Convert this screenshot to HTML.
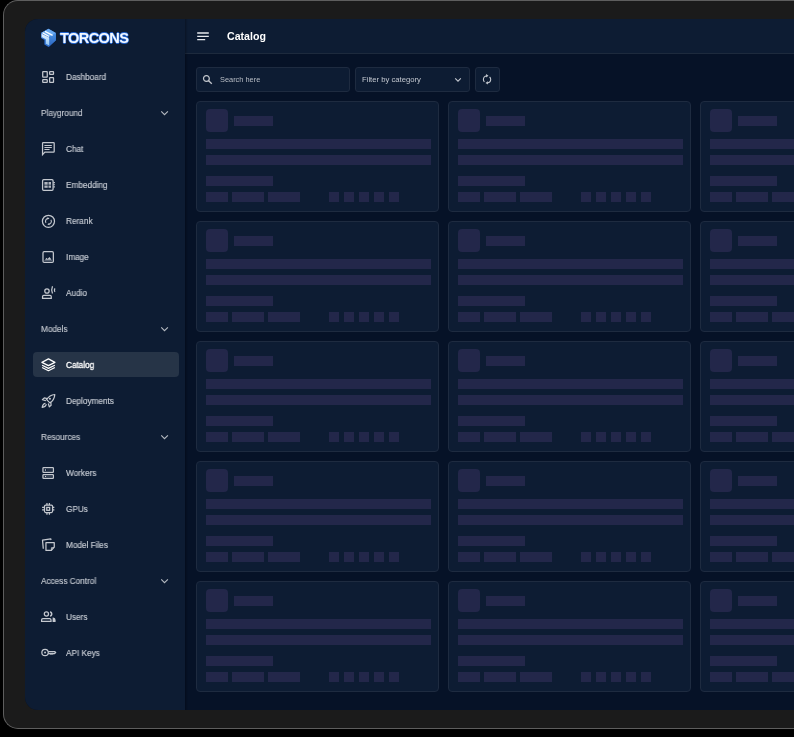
<!DOCTYPE html>
<html><head><meta charset="utf-8"><style>
*{margin:0;padding:0;box-sizing:border-box}
html,body{width:794px;height:737px;overflow:hidden;background:#000;font-family:"Liberation Sans",sans-serif}
body>*{position:absolute}
div{will-change:transform}
#bezel{left:3px;top:0;width:830px;height:729px;background:#1b1b1b;border-radius:15px;border:1px solid #5e5e5e;border-right:none}
#screen{left:25px;top:19px;width:800px;height:691px;background:#061227;border-radius:13px 0 0 13px;overflow:hidden}
#side{position:absolute;left:0;top:0;width:160px;height:691px;background:#0d1c33}
#shadow{position:absolute;left:160px;top:0;width:3px;height:691px;background:linear-gradient(to right,rgba(0,0,0,.28),rgba(0,0,0,.08) 60%,rgba(0,0,0,0))}
#hdr{position:absolute;left:160px;top:0;width:700px;height:35px;background:#0d1c33;border-bottom:1px solid #1d2a3d}
.it,.sec{font-size:8.6px;line-height:1.117;color:#c9ced6;white-space:nowrap;transform:scaleX(.955);transform-origin:0 0;-webkit-text-stroke:.15px currentColor}
.it{left:66.3px}
.sec{left:40.6px;color:#c2c7cf}
.act{color:#fff;-webkit-text-stroke:.3px #fff}
.ic{left:38px;color:#c4c8cf}
.chev{left:155px}
#actbg{left:33px;top:352px;width:146px;height:25px;background:#263447;border-radius:4px}
.card{width:243px;height:111px;background:#0d1c33;border:1px solid #1e2b40;border-radius:4px}
.card i{position:absolute;display:block;background:#23274a}
.card .av{left:9px;top:7px;width:22px;height:23px;border-radius:4px}
.card .b{height:10px}
.card .s{top:90.2px;width:10.7px;height:10px}
.box{height:24.5px;background:#0d1c33;border:1px solid #1e2b40;border-radius:3px}
</style></head><body>
<div id="bezel"></div>
<div id="screen">
<div id="side"></div>
<div id="hdr"></div>
<div id="shadow"></div>
</div>
<div id="actbg"></div>
<div class="it" style="top:73.12px">Dashboard</div><svg class="ic" style="top:67.00px;" width="20" height="20" viewBox="0 0 20 20"><g stroke="currentColor" fill="none" stroke-width="1.25"><rect x="4.72" y="4.72" width="4.53" height="5.48" rx=".4"/><rect x="4.72" y="12.59" width="4.53" height="2.77" rx=".4"/><rect x="11.64" y="4.72" width="3.86" height="2.77" rx=".4"/><rect x="11.64" y="10.55" width="3.86" height="4.81" rx=".4"/></g></svg><div class="sec" style="top:109.10px">Playground</div><svg class="chev" style="top:103.03px" width="20" height="20" viewBox="0 0 20 20"><path d="M6.24 8.41L9.5 11.67 12.9 8.28" stroke="#b4b9c0" stroke-width="1.1" fill="none"/></svg><div class="it" style="top:145.08px">Chat</div><svg class="ic" style="top:138.96px;" width="20" height="20" viewBox="0 0 20 20"><g stroke="currentColor" fill="none" stroke-width="1.25" stroke-width="1.2"><path d="M4.55 15.6V4.3q0-.7.7-.7H15.5q.7 0 .7.7v8.1q0 .7-.7.7H6.9z"/><path d="M6.4 6.5h7.4M6.4 8.45h7.4M6.4 10.45h5.2" stroke-width="1.15"/></g></svg><div class="it" style="top:181.06px">Embedding</div><svg class="ic" style="top:174.94px;" width="20" height="20" viewBox="0 0 20 20"><g stroke="currentColor" fill="none" stroke-width="1.25"><rect x="4.58" y="4.58" width="10.5" height="10.78" rx="1.1"/><path d="M15.3 7.6h1.6M15.3 9.7h1.6M15.3 11.9h1.6" stroke-width="1.1"/></g><g fill="currentColor" stroke="none" opacity=".9"><rect x="6.4" y="7" width="3.3" height="2.7"/><rect x="10.5" y="7" width="2.5" height="2.7"/><rect x="6.4" y="10.5" width="3.3" height="2.3"/><rect x="10.5" y="10.5" width="2.5" height="2.3"/></g></svg><div class="it" style="top:217.04px">Rerank</div><svg class="ic" style="top:210.92px;" width="20" height="20" viewBox="0 0 20 20"><g stroke="currentColor" fill="none" stroke-width="1.25" stroke-width="1.2"><circle cx="10.45" cy="10.31" r="6.05"/><path d="M10.6 7.4A2.9 2.9 0 0 0 8 11.9M10.3 13.2A2.9 2.9 0 0 0 12.9 8.7" stroke-width="1.1"/></g><g fill="currentColor" stroke="none"><path d="M9.4 6.3L11.6 7.4 9.4 8.5z M11.5 12.1L9.3 13.2 11.5 14.3z"/></g></svg><div class="it" style="top:253.02px">Image</div><svg class="ic" style="top:246.90px;" width="20" height="20" viewBox="0 0 20 20"><g stroke="currentColor" fill="none" stroke-width="1.25"><rect x="4.99" y="4.72" width="10.37" height="10.64" rx="1.2"/><path d="M6.3 13.5h7.8" stroke-width=".9" opacity=".45"/></g><path fill="currentColor" stroke="none" d="M7 12.7L8.5 10.8 9.5 11.9 11.5 10 13.6 12.7z"/></svg><div class="it" style="top:289.00px">Audio</div><svg class="ic" style="top:282.88px;" width="20" height="20" viewBox="0 0 20 20"><g stroke="currentColor" fill="none" stroke-width="1.25" stroke-width="1.2"><circle cx="8.96" cy="8" r="2.2"/><path d="M4.55 15.4v-1.9q0-1.2 1.2-1.2h6.3q1.2 0 1.2 1.2v1.9z"/><path d="M14.5 3.3Q12.9 6.9 14.5 10.6M16.9 5.3Q15.8 7.1 16.9 8.9"/></g></svg><div class="sec" style="top:324.98px">Models</div><svg class="chev" style="top:318.91px" width="20" height="20" viewBox="0 0 20 20"><path d="M6.24 8.41L9.5 11.67 12.9 8.28" stroke="#b4b9c0" stroke-width="1.1" fill="none"/></svg><div class="it act" style="top:360.96px">Catalog</div><svg class="ic" style="top:354.84px;color:#fff" width="20" height="20" viewBox="0 0 20 20"><g stroke="currentColor" fill="none" stroke-width="1.25" stroke-width="1.45" stroke-linejoin="round"><path d="M10.45 3.9L16.9 7.35 10.45 10.6 3.9 7.35z"/><path d="M4.1 10.3l6.35 3.1 6.4-3.1M4.1 12.5l6.35 3.2 6.4-3.2"/></g></svg><div class="it" style="top:396.94px">Deployments</div><svg class="ic" style="top:390.82px;" width="20" height="20" viewBox="0 0 20 20"><g stroke="currentColor" fill="none" stroke-width="1.25" stroke-width="1.3" stroke-linejoin="round"><path d="M16.8 3.5C13.5 3.8 10.5 5.6 8.6 8.6L11.9 11.9C14.9 10 16.6 7 16.8 3.5z"/><path d="M9.2 7.6L6.3 6.9 4.4 8.7 7.9 9.7M12.8 11.3L13.1 14.3 11.3 15.9 10.3 12.5"/><path d="M7.5 12.4C6 12.5 4.7 13.7 4.2 16.4C6.9 15.9 8.1 14.7 8.3 13.2"/></g><circle cx="11.94" cy="7.87" r="1" fill="currentColor" stroke="none"/></svg><div class="sec" style="top:432.92px">Resources</div><svg class="chev" style="top:426.85px" width="20" height="20" viewBox="0 0 20 20"><path d="M6.24 8.41L9.5 11.67 12.9 8.28" stroke="#b4b9c0" stroke-width="1.1" fill="none"/></svg><div class="it" style="top:468.90px">Workers</div><svg class="ic" style="top:462.78px;" width="20" height="20" viewBox="0 0 20 20"><g stroke="currentColor" fill="none" stroke-width="1.25" stroke-width="1.25"><rect x="4.95" y="4.67" width="10.45" height="4.8" rx=".7"/><rect x="4.95" y="11.6" width="10.45" height="3.8" rx=".7"/></g><g fill="currentColor" stroke="none"><rect x="6.9" y="6.1" width=".9" height="1.8"/><circle cx="7.46" cy="13.45" r=".65"/></g><path d="M8.9 7h5.3M8.1 13.45h6.1" stroke="currentColor" stroke-width=".9" opacity=".25"/></svg><div class="it" style="top:504.88px">GPUs</div><svg class="ic" style="top:498.76px;" width="20" height="20" viewBox="0 0 20 20"><g stroke="currentColor" fill="none" stroke-width="1.25" stroke-width="1.3"><rect x="6.5" y="6.1" width="8.05" height="7.4" rx="1.2"/><rect x="8.75" y="8.4" width="2.9" height="2.9"/><path d="M8.96 4.1v2M11.4 4.1v2M8.96 13.5v2.2M11.4 13.5v2.2M4.1 8.4h2.4M4.1 10.85h2.4M14.55 8.4h1.8M14.55 10.85h1.8"/></g></svg><div class="it" style="top:540.86px">Model Files</div><svg class="ic" style="top:534.74px;" width="20" height="20" viewBox="0 0 20 20"><g stroke="currentColor" fill="none" stroke-width="1.25" stroke-width="1.2" stroke-linejoin="round"><path d="M5.3 13.8L4.5 5.1 12.7 3.9l.5 1"/><path d="M7.95 7.65h8.3v4.5l-3.1 3.3H7.95z"/><path d="M13.4 15.3v-2.6h2.7" stroke-width=".9"/></g></svg><div class="sec" style="top:576.84px">Access Control</div><svg class="chev" style="top:570.77px" width="20" height="20" viewBox="0 0 20 20"><path d="M6.24 8.41L9.5 11.67 12.9 8.28" stroke="#b4b9c0" stroke-width="1.1" fill="none"/></svg><div class="it" style="top:612.82px">Users</div><svg class="ic" style="top:606.70px;" width="20" height="20" viewBox="0 0 20 20"><g stroke="currentColor" fill="none" stroke-width="1.25" stroke-width="1.2"><circle cx="8.41" cy="7.06" r="2.1"/><path d="M3.6 14.3v-1.4q0-1.4 1.4-1.4h6.6q1.4 0 1.4 1.4v1.4z"/><path d="M12.2 4.7A2.5 2.5 0 0 1 12.2 9.3" stroke-width="1.6"/></g><path fill="currentColor" stroke="none" d="M14.6 10.6h.6q2.4.2 2.4 2.4v1.9h-3z"/></svg><div class="it" style="top:648.80px">API Keys</div><svg class="ic" style="top:642.68px;" width="20" height="20" viewBox="0 0 20 20"><g stroke="currentColor" fill="none" stroke-width="1.25" stroke-width="1.2" stroke-linejoin="round"><circle cx="7.06" cy="9.5" r="3.2"/><path d="M10.2 8.6H16.6L17.7 9.5 16.6 10.5H15.4L14.8 11 14.2 10.5 13.6 11 13 10.5 12.4 11 11.8 10.5H10.2"/></g><circle cx="7.06" cy="9.5" r=".95" fill="currentColor" stroke="none"/></svg>
<div id="logo" style="left:60.2px;top:30.09px;font-size:14.6px;line-height:1.117;font-weight:bold;color:#f4f9ff;letter-spacing:-0.62px;text-shadow:.6px 0 0 #2466d0,-.6px 0 0 #2466d0,0 .6px 0 #2466d0,0 -.6px 0 #2466d0,0 0 1.5px #1b4fa8">TORCONS</div>
<svg style="left:38px;top:26px" width="22" height="22" viewBox="0 0 22 22">
<defs><linearGradient id="lg1" x1="0" y1="0" x2="0" y2="1"><stop offset="0" stop-color="#e8f4ff"/><stop offset="1" stop-color="#8cc4f4"/></linearGradient>
<linearGradient id="lg2" x1="0" y1="0" x2="0" y2="1"><stop offset="0" stop-color="#4b94e6"/><stop offset="1" stop-color="#2a63be"/></linearGradient></defs>
<path d="M10.45 2.8L17.9 7V14.2L10.6 20.9 6.4 18.5V14L3 12V7z" fill="#2f70cf"/>
<path d="M11.9 10.4L17.9 7V14.2L10.6 20.9z" fill="url(#lg2)"/>
<path d="M3 7L10.45 2.8 17.9 7 11.9 10.4z" fill="#6aaaf0"/>
<path d="M4.6 6.9l6.6 3.6M7 5.3l7.6 4" stroke="#fbfdff" stroke-width="1.3"/>
<path d="M3.6 7.8L11.2 11.6V19.6L7.4 17.6V13.4L3.6 11.4z" fill="url(#lg1)"/>
<path d="M7.4 13.6L3.6 11.4M7.4 13.4V17.6" stroke="#2a6bd1" stroke-width=".7"/>
</svg>
<div style="left:226.6px;top:30.61px;font-size:10.6px;line-height:1.117;font-weight:bold;color:#fff">Catalog</div>
<svg style="left:196px;top:31px" width="15" height="11" viewBox="0 0 15 11"><path d="M1.2 2h11.6M1.2 5.3h11.6M1.2 8.6h8" stroke="#e6e9ee" stroke-width="1.3"/></svg>
<div class="box" style="left:196px;top:67px;width:154px"></div>
<div class="box" style="left:355px;top:67px;width:115px"></div>
<div class="box" style="left:475px;top:67px;width:25px"></div>
<svg style="left:202px;top:73.5px" width="12" height="12" viewBox="0 0 12 12"><circle cx="4.4" cy="4.5" r="2.9" stroke="#c4c8cf" stroke-width="1.2" fill="none"/><path d="M6.6 6.7l3.2 3" stroke="#c4c8cf" stroke-width="1.3"/></svg>
<svg style="left:453.5px;top:76.5px" width="8" height="6" viewBox="0 0 8 6"><path d="M1.2 1.3l2.8 2.8 2.8-2.8" stroke="#c4c8cf" stroke-width="1.1" fill="none"/></svg>
<svg style="left:477px;top:69px" width="20" height="20" viewBox="0 0 20 20"><g stroke="#c4c8cf" stroke-width="1.1" fill="none"><path d="M9.8 6.8C7.7 7.2 6.4 8.8 6.4 10.5C6.4 11.4 6.8 12.2 7.4 12.8M12.6 8C13.3 8.6 13.7 9.5 13.7 10.4C13.7 12.1 12.4 13.5 10.3 13.9"/></g><path d="M9.1 5.1L11.5 6.8 9.1 8.5z M10.9 12.2L8.5 13.9 10.9 15.6z" fill="#c4c8cf"/></svg>
<div style="left:220px;top:75.60px;font-size:7.4px;line-height:1.117;color:#b9bec6">Search here</div>
<div style="left:361.8px;top:76.13px;font-size:7.7px;line-height:1.117;color:#c2c7cf">Filter by category</div>
<div class="card" style="left:196px;top:101.0px"><i class="av"></i><i class="b" style="left:36.5px;top:14px;width:39px"></i><i class="b" style="left:8.7px;top:37.2px;width:225px"></i><i class="b" style="left:8.7px;top:53px;width:225px"></i><i class="b" style="left:8.7px;top:74.2px;width:67px"></i><i class="b" style="left:8.7px;top:90.2px;width:22px"></i><i class="b" style="left:34.7px;top:90.2px;width:32px"></i><i class="b" style="left:70.5px;top:90.2px;width:32px"></i><i class="b s" style="left:131.8px"></i><i class="b s" style="left:146.8px"></i><i class="b s" style="left:161.8px"></i><i class="b s" style="left:176.8px"></i><i class="b s" style="left:191.8px"></i></div><div class="card" style="left:448px;top:101.0px"><i class="av"></i><i class="b" style="left:36.5px;top:14px;width:39px"></i><i class="b" style="left:8.7px;top:37.2px;width:225px"></i><i class="b" style="left:8.7px;top:53px;width:225px"></i><i class="b" style="left:8.7px;top:74.2px;width:67px"></i><i class="b" style="left:8.7px;top:90.2px;width:22px"></i><i class="b" style="left:34.7px;top:90.2px;width:32px"></i><i class="b" style="left:70.5px;top:90.2px;width:32px"></i><i class="b s" style="left:131.8px"></i><i class="b s" style="left:146.8px"></i><i class="b s" style="left:161.8px"></i><i class="b s" style="left:176.8px"></i><i class="b s" style="left:191.8px"></i></div><div class="card" style="left:700px;top:101.0px"><i class="av"></i><i class="b" style="left:36.5px;top:14px;width:39px"></i><i class="b" style="left:8.7px;top:37.2px;width:225px"></i><i class="b" style="left:8.7px;top:53px;width:225px"></i><i class="b" style="left:8.7px;top:74.2px;width:67px"></i><i class="b" style="left:8.7px;top:90.2px;width:22px"></i><i class="b" style="left:34.7px;top:90.2px;width:32px"></i><i class="b" style="left:70.5px;top:90.2px;width:32px"></i><i class="b s" style="left:131.8px"></i><i class="b s" style="left:146.8px"></i><i class="b s" style="left:161.8px"></i><i class="b s" style="left:176.8px"></i><i class="b s" style="left:191.8px"></i></div><div class="card" style="left:196px;top:220.95px"><i class="av"></i><i class="b" style="left:36.5px;top:14px;width:39px"></i><i class="b" style="left:8.7px;top:37.2px;width:225px"></i><i class="b" style="left:8.7px;top:53px;width:225px"></i><i class="b" style="left:8.7px;top:74.2px;width:67px"></i><i class="b" style="left:8.7px;top:90.2px;width:22px"></i><i class="b" style="left:34.7px;top:90.2px;width:32px"></i><i class="b" style="left:70.5px;top:90.2px;width:32px"></i><i class="b s" style="left:131.8px"></i><i class="b s" style="left:146.8px"></i><i class="b s" style="left:161.8px"></i><i class="b s" style="left:176.8px"></i><i class="b s" style="left:191.8px"></i></div><div class="card" style="left:448px;top:220.95px"><i class="av"></i><i class="b" style="left:36.5px;top:14px;width:39px"></i><i class="b" style="left:8.7px;top:37.2px;width:225px"></i><i class="b" style="left:8.7px;top:53px;width:225px"></i><i class="b" style="left:8.7px;top:74.2px;width:67px"></i><i class="b" style="left:8.7px;top:90.2px;width:22px"></i><i class="b" style="left:34.7px;top:90.2px;width:32px"></i><i class="b" style="left:70.5px;top:90.2px;width:32px"></i><i class="b s" style="left:131.8px"></i><i class="b s" style="left:146.8px"></i><i class="b s" style="left:161.8px"></i><i class="b s" style="left:176.8px"></i><i class="b s" style="left:191.8px"></i></div><div class="card" style="left:700px;top:220.95px"><i class="av"></i><i class="b" style="left:36.5px;top:14px;width:39px"></i><i class="b" style="left:8.7px;top:37.2px;width:225px"></i><i class="b" style="left:8.7px;top:53px;width:225px"></i><i class="b" style="left:8.7px;top:74.2px;width:67px"></i><i class="b" style="left:8.7px;top:90.2px;width:22px"></i><i class="b" style="left:34.7px;top:90.2px;width:32px"></i><i class="b" style="left:70.5px;top:90.2px;width:32px"></i><i class="b s" style="left:131.8px"></i><i class="b s" style="left:146.8px"></i><i class="b s" style="left:161.8px"></i><i class="b s" style="left:176.8px"></i><i class="b s" style="left:191.8px"></i></div><div class="card" style="left:196px;top:340.9px"><i class="av"></i><i class="b" style="left:36.5px;top:14px;width:39px"></i><i class="b" style="left:8.7px;top:37.2px;width:225px"></i><i class="b" style="left:8.7px;top:53px;width:225px"></i><i class="b" style="left:8.7px;top:74.2px;width:67px"></i><i class="b" style="left:8.7px;top:90.2px;width:22px"></i><i class="b" style="left:34.7px;top:90.2px;width:32px"></i><i class="b" style="left:70.5px;top:90.2px;width:32px"></i><i class="b s" style="left:131.8px"></i><i class="b s" style="left:146.8px"></i><i class="b s" style="left:161.8px"></i><i class="b s" style="left:176.8px"></i><i class="b s" style="left:191.8px"></i></div><div class="card" style="left:448px;top:340.9px"><i class="av"></i><i class="b" style="left:36.5px;top:14px;width:39px"></i><i class="b" style="left:8.7px;top:37.2px;width:225px"></i><i class="b" style="left:8.7px;top:53px;width:225px"></i><i class="b" style="left:8.7px;top:74.2px;width:67px"></i><i class="b" style="left:8.7px;top:90.2px;width:22px"></i><i class="b" style="left:34.7px;top:90.2px;width:32px"></i><i class="b" style="left:70.5px;top:90.2px;width:32px"></i><i class="b s" style="left:131.8px"></i><i class="b s" style="left:146.8px"></i><i class="b s" style="left:161.8px"></i><i class="b s" style="left:176.8px"></i><i class="b s" style="left:191.8px"></i></div><div class="card" style="left:700px;top:340.9px"><i class="av"></i><i class="b" style="left:36.5px;top:14px;width:39px"></i><i class="b" style="left:8.7px;top:37.2px;width:225px"></i><i class="b" style="left:8.7px;top:53px;width:225px"></i><i class="b" style="left:8.7px;top:74.2px;width:67px"></i><i class="b" style="left:8.7px;top:90.2px;width:22px"></i><i class="b" style="left:34.7px;top:90.2px;width:32px"></i><i class="b" style="left:70.5px;top:90.2px;width:32px"></i><i class="b s" style="left:131.8px"></i><i class="b s" style="left:146.8px"></i><i class="b s" style="left:161.8px"></i><i class="b s" style="left:176.8px"></i><i class="b s" style="left:191.8px"></i></div><div class="card" style="left:196px;top:460.85px"><i class="av"></i><i class="b" style="left:36.5px;top:14px;width:39px"></i><i class="b" style="left:8.7px;top:37.2px;width:225px"></i><i class="b" style="left:8.7px;top:53px;width:225px"></i><i class="b" style="left:8.7px;top:74.2px;width:67px"></i><i class="b" style="left:8.7px;top:90.2px;width:22px"></i><i class="b" style="left:34.7px;top:90.2px;width:32px"></i><i class="b" style="left:70.5px;top:90.2px;width:32px"></i><i class="b s" style="left:131.8px"></i><i class="b s" style="left:146.8px"></i><i class="b s" style="left:161.8px"></i><i class="b s" style="left:176.8px"></i><i class="b s" style="left:191.8px"></i></div><div class="card" style="left:448px;top:460.85px"><i class="av"></i><i class="b" style="left:36.5px;top:14px;width:39px"></i><i class="b" style="left:8.7px;top:37.2px;width:225px"></i><i class="b" style="left:8.7px;top:53px;width:225px"></i><i class="b" style="left:8.7px;top:74.2px;width:67px"></i><i class="b" style="left:8.7px;top:90.2px;width:22px"></i><i class="b" style="left:34.7px;top:90.2px;width:32px"></i><i class="b" style="left:70.5px;top:90.2px;width:32px"></i><i class="b s" style="left:131.8px"></i><i class="b s" style="left:146.8px"></i><i class="b s" style="left:161.8px"></i><i class="b s" style="left:176.8px"></i><i class="b s" style="left:191.8px"></i></div><div class="card" style="left:700px;top:460.85px"><i class="av"></i><i class="b" style="left:36.5px;top:14px;width:39px"></i><i class="b" style="left:8.7px;top:37.2px;width:225px"></i><i class="b" style="left:8.7px;top:53px;width:225px"></i><i class="b" style="left:8.7px;top:74.2px;width:67px"></i><i class="b" style="left:8.7px;top:90.2px;width:22px"></i><i class="b" style="left:34.7px;top:90.2px;width:32px"></i><i class="b" style="left:70.5px;top:90.2px;width:32px"></i><i class="b s" style="left:131.8px"></i><i class="b s" style="left:146.8px"></i><i class="b s" style="left:161.8px"></i><i class="b s" style="left:176.8px"></i><i class="b s" style="left:191.8px"></i></div><div class="card" style="left:196px;top:580.8px"><i class="av"></i><i class="b" style="left:36.5px;top:14px;width:39px"></i><i class="b" style="left:8.7px;top:37.2px;width:225px"></i><i class="b" style="left:8.7px;top:53px;width:225px"></i><i class="b" style="left:8.7px;top:74.2px;width:67px"></i><i class="b" style="left:8.7px;top:90.2px;width:22px"></i><i class="b" style="left:34.7px;top:90.2px;width:32px"></i><i class="b" style="left:70.5px;top:90.2px;width:32px"></i><i class="b s" style="left:131.8px"></i><i class="b s" style="left:146.8px"></i><i class="b s" style="left:161.8px"></i><i class="b s" style="left:176.8px"></i><i class="b s" style="left:191.8px"></i></div><div class="card" style="left:448px;top:580.8px"><i class="av"></i><i class="b" style="left:36.5px;top:14px;width:39px"></i><i class="b" style="left:8.7px;top:37.2px;width:225px"></i><i class="b" style="left:8.7px;top:53px;width:225px"></i><i class="b" style="left:8.7px;top:74.2px;width:67px"></i><i class="b" style="left:8.7px;top:90.2px;width:22px"></i><i class="b" style="left:34.7px;top:90.2px;width:32px"></i><i class="b" style="left:70.5px;top:90.2px;width:32px"></i><i class="b s" style="left:131.8px"></i><i class="b s" style="left:146.8px"></i><i class="b s" style="left:161.8px"></i><i class="b s" style="left:176.8px"></i><i class="b s" style="left:191.8px"></i></div><div class="card" style="left:700px;top:580.8px"><i class="av"></i><i class="b" style="left:36.5px;top:14px;width:39px"></i><i class="b" style="left:8.7px;top:37.2px;width:225px"></i><i class="b" style="left:8.7px;top:53px;width:225px"></i><i class="b" style="left:8.7px;top:74.2px;width:67px"></i><i class="b" style="left:8.7px;top:90.2px;width:22px"></i><i class="b" style="left:34.7px;top:90.2px;width:32px"></i><i class="b" style="left:70.5px;top:90.2px;width:32px"></i><i class="b s" style="left:131.8px"></i><i class="b s" style="left:146.8px"></i><i class="b s" style="left:161.8px"></i><i class="b s" style="left:176.8px"></i><i class="b s" style="left:191.8px"></i></div>
</body></html>
